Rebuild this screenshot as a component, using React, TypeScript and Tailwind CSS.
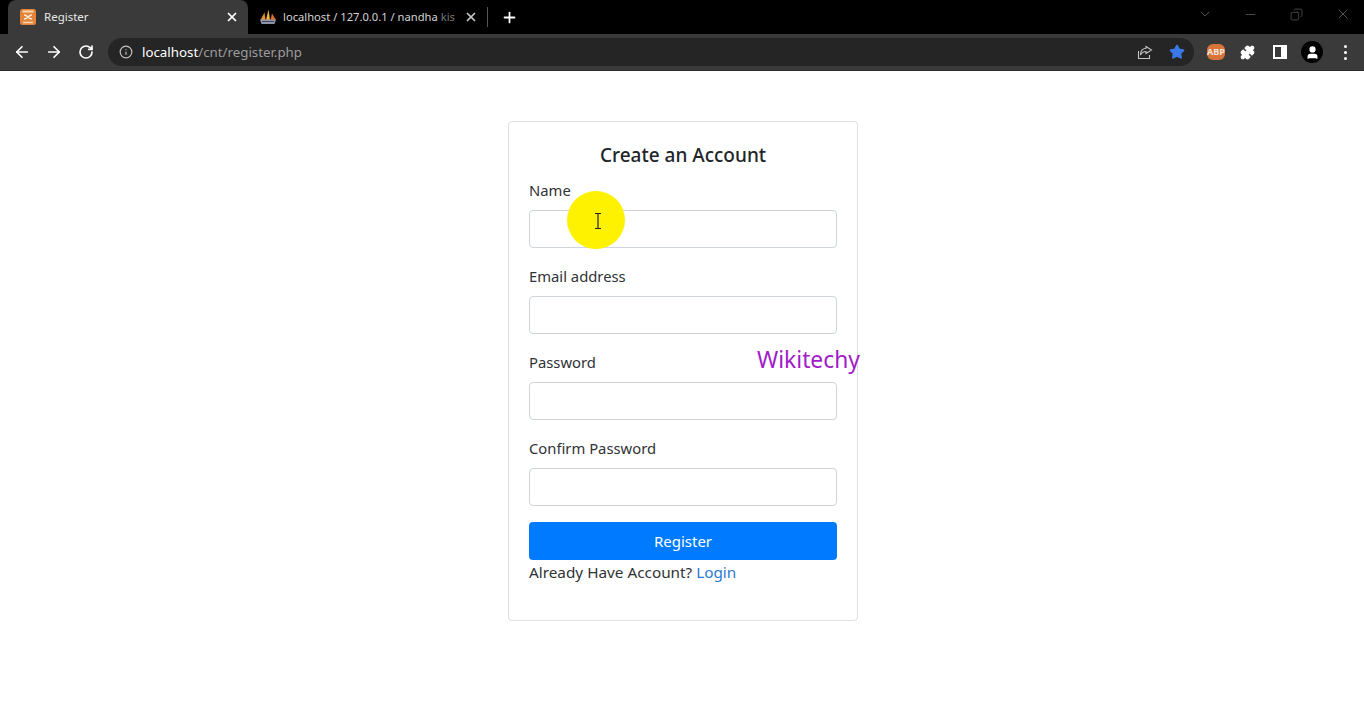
import { ArrowLeft, ArrowRight, RotateCw, Info, X, Plus, Star, Puzzle, User, ChevronDown, Minus, Copy } from 'lucide-react';

const uiFont = "font-['Noto_Sans','Open_Sans',sans-serif]";

const fields = ['Name', 'Email address', 'Password', 'Confirm Password'];

function XamppIcon() {
  return (
    <svg width="16" height="16" viewBox="0 0 16 16">
      <rect width="16" height="16" rx="2.5" fill="#e2843c" />
      <path d="M2.500 2.500h11" stroke="#fbd9b0" strokeWidth="2" />
      <path d="M4 6c2 0 3 1 4 2s2 2 4 2M12 6c-2 0-3 1-4 2s-2 2-4 2" fill="none" stroke="#fde9d2" strokeWidth="1.600" />
      <path d="M3 13.500h10" stroke="#fbd9b0" strokeWidth="1.500" />
    </svg>
  );
}

function PmaIcon() {
  return (
    <svg width="18" height="16" viewBox="0 0 18 16">
      <path d="M1.500 11 5.500 3.500 6.500 11z" fill="#e8912d" />
      <path d="M7 11 9.500 .5 11 11z" fill="#f2b441" />
      <path d="M11.500 11 13 4.500 17 11z" fill="#d9701f" />
      <path d="M1 10.500h16l-1.500 4.500h-13z" fill="#8d93a8" />
      <path d="M3 12.500h12" stroke="#44475a" strokeWidth="1" />
    </svg>
  );
}

function TabStrip() {
  return (
    <div className={`flex h-[34px] items-end bg-black ${uiFont}`}>
      <div className="ml-2 flex h-[34px] w-[240px] shrink-0 items-center rounded-t-lg bg-[#3a3a3a] pl-3 pr-[9px]">
        <XamppIcon />
        <span className="ml-2 text-[11.5px] text-[#e8e8e8]">Register</span>
        <X className="ml-auto text-white" size={14} strokeWidth={3} />
      </div>
      <div className="flex h-[34px] w-[240px] shrink-0 items-center pl-[11px]">
        <PmaIcon />
        <span className="ml-[6px] w-[174px] shrink-0 whitespace-nowrap text-[11.2px] text-[#d4d4d4]">
          localhost / 127.0.0.1 / nandha <span className="text-[#777777]">kis</span>
        </span>
        <X className="ml-[7px] shrink-0 text-[#c8c8c8]" size={14} strokeWidth={3} />
        <div className="ml-[9px] h-5 w-px shrink-0 bg-[#555555]" />
      </div>
      <div className="flex h-[34px] items-center pl-[13px]">
        <Plus className="text-white" size={17} strokeWidth={2.5} />
      </div>
      <div className="ml-auto flex h-[34px] items-center pb-[6px] text-[#5f5f5f]">
        <ChevronDown size={16} strokeWidth={1.25} />
        <Minus className="ml-[30px]" size={15} strokeWidth={1.25} />
        <Copy className="ml-[32px] -scale-x-100" size={13} strokeWidth={1.25} />
        <X className="ml-[32px] mr-[13px]" size={16} strokeWidth={1.25} />
      </div>
    </div>
  );
}

function Toolbar() {
  return (
    <div className={`flex h-[37px] items-center border-b border-[#2c2c2c] bg-[#3a3a3a] pl-[13px] ${uiFont}`}>
      <ArrowLeft className="text-white" size={18} strokeWidth={2.25} />
      <ArrowRight className="ml-[14px] text-white" size={18} strokeWidth={2.25} />
      <RotateCw className="ml-[15px] text-white" size={16} strokeWidth={2.5} />
      <div className="ml-[14px] flex h-7 w-[1086px] items-center rounded-full bg-[#252525] pl-[11px] pr-[9px]">
        <Info className="text-[#c4c4c4]" size={14} />
        <span className="ml-[9px] pt-px text-[13.3px] text-white">localhost</span>
        <span className="pt-px text-[13.3px] text-[#9c9c9c]">/cnt/register.php</span>
        <svg className="ml-auto text-[#c4c4c4]" width="16" height="16" viewBox="0 0 16 16" fill="none" stroke="currentColor" strokeWidth="1.1">
          <path d="M9 2.500 14.500 6 9 9.500V7.500C6 7.500 4.500 9 3.500 11c0-4 2-6.500 5.500-6.800z" />
          <path d="M1.500 7v7.500h11V11" />
        </svg>
        <Star className="ml-4 text-[#3b78e7]" size={16} fill="currentColor" />
      </div>
      <div className="ml-[13px] flex h-4 w-[18px] items-center justify-center rounded-md bg-[#d8743a] text-[9px] font-bold text-[#f5e5d8]">ABP</div>
      <Puzzle className="ml-[15px] text-white" size={15} fill="currentColor" />
      <div className="ml-[18px] flex h-[14px] w-[14px] justify-end border-2 border-white">
        <div className="h-full w-1 bg-white" />
      </div>
      <div className="ml-[14px] flex h-[22px] w-[22px] items-center justify-center rounded-full bg-black">
        <User className="text-white" size={15} fill="currentColor" />
      </div>
      <div className="ml-[21px] flex flex-col gap-[3px]">
        <div className="h-[3px] w-[3px] rounded-full bg-white" />
        <div className="h-[3px] w-[3px] rounded-full bg-white" />
        <div className="h-[3px] w-[3px] rounded-full bg-white" />
      </div>
    </div>
  );
}

export default function App() {
  return (
    <div className="h-[728px] w-[1364px] overflow-hidden bg-white">
      <TabStrip />
      <Toolbar />
      <main className={`relative flex justify-center pt-[50px] pl-[2px] ${uiFont} text-[14.8px] text-[#2f3337]`}>
        <div className="relative w-[350px] rounded border border-[#dfdfdf] p-5">
          <h3 className="mb-[10px] text-center text-[19px] leading-[26px] font-medium text-[#212529]">Create an Account</h3>
          {fields.map((label) => (
            <div key={label} className="mb-4">
              <label className="mb-2 block leading-6">{label}</label>
              <input className="block h-[38px] w-full rounded border border-[#ced4da] bg-white" />
            </div>
          ))}
          <button className="block h-[38px] w-full rounded bg-[#007bff] text-center text-[15px] text-white">Register</button>
          <p className="mb-4 text-[15.3px] leading-6">
            Already Have Account? <a className="text-[#2b78d4]">Login</a>
          </p>

          {/* cursor highlight from the screen recording */}
          <div className="absolute top-[69px] left-[58px] flex h-[58px] w-[58px] items-center justify-center rounded-full bg-[#fff200]">
            <svg className="mt-px ml-1" width="8" height="16" viewBox="0 0 8 16" fill="none" stroke="#222222" strokeWidth="1.2">
              <path d="M1 .5h6M1 15.500h6M4 .5v15" />
            </svg>
          </div>
          <span className="absolute top-[222px] left-[248px] text-[22.8px] leading-8 whitespace-nowrap text-[#a21cc9]">Wikitechy</span>
        </div>
      </main>
    </div>
  );
}
